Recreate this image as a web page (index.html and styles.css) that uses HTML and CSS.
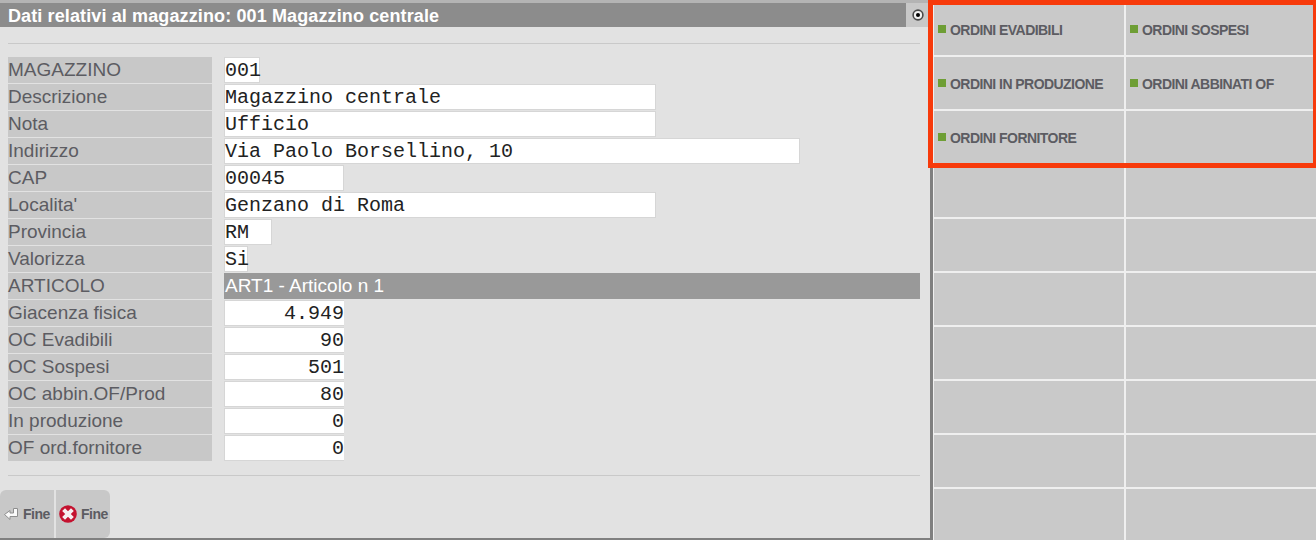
FILE: index.html
```html
<!DOCTYPE html>
<html lang="en">
<head>
    <meta charset="UTF-8">
    <title>Dati magazzino</title>
    <link rel="stylesheet" href="styles.css">
</head>
<body>
    <div class="screen">
        <div class="window">
            <div class="title-bar">
                <span class="title-text">Dati relativi al magazzino: 001 Magazzino centrale</span>
                <span class="title-menu">
                    <svg width="14" height="14" viewBox="0 0 14 14"><circle cx="7" cy="7" r="4.9" fill="#f2f2f2" stroke="#4a4a4a" stroke-width="1.6"/><circle cx="7" cy="7" r="2" fill="#000"/></svg>
                </span>
            </div>
            <div class="form">
                <div class="label">MAGAZZINO</div><div class="field w3">001</div>
                <div class="label">Descrizione</div><div class="field w36">Magazzino centrale</div>
                <div class="label">Nota</div><div class="field w36">Ufficio</div>
                <div class="label">Indirizzo</div><div class="field w48">Via Paolo Borsellino, 10</div>
                <div class="label">CAP</div><div class="field w10">00045</div>
                <div class="label">Localita'</div><div class="field w36">Genzano di Roma</div>
                <div class="label">Provincia</div><div class="field w4">RM</div>
                <div class="label">Valorizza</div><div class="field w2">Si</div>
                <div class="label">ARTICOLO</div><div class="section-value">ART1 - Articolo n 1</div>
                <div class="label">Giacenza fisica</div><div class="field w10 num">4.949</div>
                <div class="label">OC Evadibili</div><div class="field w10 num">90</div>
                <div class="label">OC Sospesi</div><div class="field w10 num">501</div>
                <div class="label">OC abbin.OF/Prod</div><div class="field w10 num">80</div>
                <div class="label">In produzione</div><div class="field w10 num">0</div>
                <div class="label">OF ord.fornitore</div><div class="field w10 num">0</div>
            </div>
            <div class="actions">
                <div class="action action-first">
                    <svg width="14" height="12" viewBox="0 0 14 12"><path d="M9.5 .5H13.5V8.5H6V11.5L.5 6.5L6 2.5V5H9.5Z" fill="#fafafa" stroke="#8e8e8e" stroke-width="1"/></svg>
                    <span>Fine</span>
                </div>
                <div class="action action-last">
                    <svg width="18" height="18" viewBox="0 0 18 18"><circle cx="9" cy="9" r="8.8" fill="#c4122f"/><path d="M4.6 4.6L13.4 13.4M13.4 4.6L4.6 13.4" stroke="#f6eef0" stroke-width="4"/></svg>
                    <span>Fine</span>
                </div>
            </div>
        </div>
        <div class="tiles">
            <div class="tile"><i class="dot"></i>ORDINI EVADIBILI</div>
            <div class="tile"><i class="dot"></i>ORDINI SOSPESI</div>
            <div class="tile"><i class="dot"></i>ORDINI IN PRODUZIONE</div>
            <div class="tile"><i class="dot"></i>ORDINI ABBINATI OF</div>
            <div class="tile"><i class="dot"></i>ORDINI FORNITORE</div>
            <div class="tile"></div>
            <div class="tile"></div><div class="tile"></div>
            <div class="tile"></div><div class="tile"></div>
            <div class="tile"></div><div class="tile"></div>
            <div class="tile"></div><div class="tile"></div>
            <div class="tile"></div><div class="tile"></div>
            <div class="tile"></div><div class="tile"></div>
            <div class="tile"></div><div class="tile"></div>
        </div>
        <div class="highlight"></div>
    </div>
</body>
</html>
```

FILE: styles.css
```css
html, body {
    margin: 0;
    padding: 0;
}

body {
    width: 1316px;
    height: 540px;
    overflow: hidden;
    background-color: #efefef;
    font-family: "Liberation Sans", Arial, sans-serif;
}

.screen {
    position: relative;
    display: flex;
    height: 540px;
}

.window {
    width: 930px;
    height: 535px;
    background-color: #e2e2e2;
    border-top: 3px solid #b4b4b4;
    border-right: 3px solid #808080;
    border-bottom: 2px solid #808080;
    display: flex;
    flex-direction: column;
}

.title-bar {
    display: flex;
    justify-content: space-between;
    align-items: stretch;
    height: 24px;
    background-color: #8c8c8c;
}

.title-text {
    padding-left: 8px;
    line-height: 27px;
    font-size: 18px;
    letter-spacing: 0.12px;
    font-weight: bold;
    color: #fff;
    white-space: nowrap;
}

.title-menu {
    width: 24px;
    display: flex;
    align-items: center;
    justify-content: center;
    background-color: #c8c8c8;
}

.form {
    display: grid;
    grid-template-columns: 204px 1fr;
    grid-auto-rows: 26px;
    row-gap: 1px;
    column-gap: 12px;
    margin: 16px 10px 0 8px;
    padding: 13px 0 14px;
    border-top: 1px solid #c9c9c9;
    border-bottom: 1px solid #c9c9c9;
}

.label {
    line-height: 25px;
    background-color: #c8c8c8;
    font-size: 19px;
    color: #5c5c62;
    white-space: nowrap;
}

.field {
    box-sizing: border-box;
    height: 26px;
    line-height: 26px;
    background-color: #fff;
    border: 1px solid #d6d6d6;
    font-family: "Liberation Mono", "Courier New", monospace;
    font-size: 20px;
    color: #222;
    white-space: pre;
}

.w2 { width: 24px; }
.w3 { width: 36px; }
.w4 { width: 48px; }
.w10 { width: 120px; }
.w36 { width: 432px; }
.w48 { width: 576px; }

.num {
    text-align: right;
    border-right: 0;
}

.section-value {
    padding-left: 1px;
    line-height: 25px;
    background-color: #999;
    color: #fff;
    font-size: 19px;
}

.actions {
    display: flex;
    gap: 2px;
    margin-top: 14px;
}

.action {
    box-sizing: border-box;
    width: 54px;
    height: 48px;
    display: flex;
    align-items: center;
    padding-left: 4px;
    gap: 5px;
    background-color: #c8c8c8;
    font-size: 14px;
    letter-spacing: -0.5px;
    font-weight: bold;
    color: #5c5c62;
}

.action-first {
    border-top-left-radius: 6px;
}

.action-last {
    padding-left: 3px;
    gap: 4px;
    border-radius: 0 6px 6px 0;
}

.tiles {
    margin-left: 1px;
    flex: 1;
    display: grid;
    grid-template-columns: 190px 190px;
    grid-auto-rows: 52px;
    gap: 2px;
    padding-top: 3px;
    align-content: start;
}

.tile {
    display: flex;
    align-items: center;
    padding: 2px 0 0 4px;
    background-color: #c9c9c9;
    font-size: 14px;
    letter-spacing: -0.55px;
    font-weight: bold;
    color: #5c5c62;
    white-space: nowrap;
}

.dot {
    width: 8px;
    height: 8px;
    margin-right: 4px;
    margin-top: -2px;
    background-color: #6e9e35;
}

/* red annotation frame over the first tiles */
.highlight {
    position: absolute;
    left: 928px;
    top: 0;
    width: 388px;
    height: 168px;
    box-sizing: border-box;
    border: 5px solid #f73a0b;
    border-right-width: 3px;
}
```
